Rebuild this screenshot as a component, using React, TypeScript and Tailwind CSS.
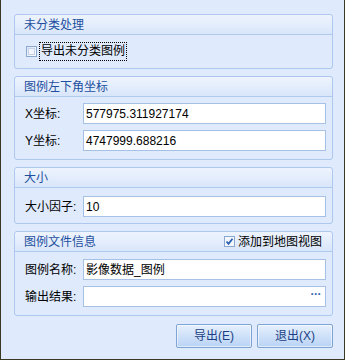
import React from "react";

const font = { fontFamily: '"Liberation Sans", "Noto Sans CJK SC", sans-serif' };

function Group({ title, right, className, children }: { title: string; right?: React.ReactNode; className?: string; children: React.ReactNode }) {
  return (
    <div className={"flex flex-col rounded-[3px] border border-[#adc7ee] bg-[#dfeafc] " + (className ?? "")}>
      <div className="flex h-[20px] shrink-0 items-center justify-between border-b border-[#b0c9ee] bg-gradient-to-b from-[#eef4fe] to-[#d9e6fa] pl-[9px] pr-[10px] rounded-t-[3px]">
        <span className="text-[12px] leading-none text-[#1d4f9e]">{title}</span>
        {right}
      </div>
      {children}
    </div>
  );
}

function Input({ value, dots }: { value: string; dots?: boolean }) {
  return (
    <div className="flex h-[21px] w-[243px] shrink-0 items-center justify-between border border-[#a7c0e6] bg-white pl-[2px] pr-[4px] text-[12px] text-black">
      <span>{value}</span>
      {dots && <span className="mb-[5px] text-[12px] font-bold leading-none tracking-[-0.5px] text-[#3c6cb4]">···</span>}
    </div>
  );
}

function Row({ label, children, className }: { label: string; children: React.ReactNode; className?: string }) {
  return (
    <div className={"flex items-center " + (className ?? "")}>
      <span className="w-[68px] shrink-0 pl-[10px] text-[12px] text-black whitespace-nowrap">{label}</span>
      {children}
    </div>
  );
}

function CheckBox({ checked }: { checked?: boolean }) {
  return (
    <span className="flex h-[11px] w-[11px] shrink-0 items-center justify-center border border-[#8aa7cf] bg-gradient-to-br from-[#dfe7f3] to-[#fbfcfe]">
      {checked ? (
        <svg width="9" height="9" viewBox="0 0 9 9">
          <rect x="0" y="0" width="9" height="9" fill="#f4f7fc" />
          <path d="M1.5 4.5 L3.5 6.8 L7.5 1.8" stroke="#2a5fb0" strokeWidth="1.8" fill="none" />
        </svg>
      ) : (
        <span className="h-[7px] w-[7px] border border-[#c4d3ea] bg-[#f2f6fc]" />
      )}
    </span>
  );
}

function Button({ children }: { children: React.ReactNode }) {
  return (
    <div className="flex h-[24px] w-[76px] items-center justify-center rounded-[2px] border border-[#7ea4d6] bg-gradient-to-b from-[#e6f0fd] via-[#cfe1f9] to-[#b9d3f5] text-[12px] text-[#1b3f85] shadow-[inset_0_0_0_1px_rgba(255,255,255,0.55)]">
      {children}
    </div>
  );
}

export default function App() {
  return (
    <div style={font} className="flex h-[360px] w-[345px] flex-col border-b border-l border-r border-[#3a3a24] bg-[#dfeafc] pl-[13px] pr-[11px] pt-[14px]">
      <Group title="未分类处理" className="h-[55px]">
        <div className="flex flex-1 items-center pl-[11px]">
          <CheckBox />
          <span className="ml-[2px] border border-dotted border-black px-[1px] py-[1px] text-[12px] leading-[15px] text-black">导出未分类图例</span>
        </div>
      </Group>

      <Group title="图例左下角坐标" className="mt-[7px] h-[84px]">
        <div className="flex flex-col pt-[6px]">
          <Row label="X坐标:">
            <Input value="577975.311927174" />
          </Row>
          <Row label="Y坐标:" className="mt-[6px]">
            <Input value="4747999.688216" />
          </Row>
        </div>
      </Group>

      <Group title="大小" className="mt-[7px] h-[57px]">
        <div className="flex flex-col pt-[8px]">
          <Row label="大小因子:">
            <Input value="10" />
          </Row>
        </div>
      </Group>

      <Group
        title="图例文件信息"
        className="mt-[7px] h-[85px]"
        right={
          <span className="flex items-center gap-[3px]">
            <CheckBox checked />
            <span className="text-[12px] text-black">添加到地图视图</span>
          </span>
        }
      >
        <div className="flex flex-col pt-[7px]">
          <Row label="图例名称:">
            <Input value="影像数据_图例" />
          </Row>
          <Row label="输出结果:" className="mt-[6px]">
            <Input value="" dots />
          </Row>
        </div>
      </Group>

      <div className="mt-[8px] flex justify-end gap-[5px]">
        <Button>导出(E)</Button>
        <Button>退出(X)</Button>
      </div>
    </div>
  );
}
